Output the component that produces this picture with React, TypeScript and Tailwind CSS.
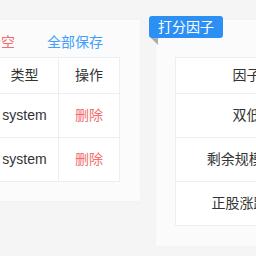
const font = "font-['Liberation_Sans','Noto_Sans_CJK_SC',sans-serif]";

const leftRows = [
  { name: "默认", type: "system" },
  { name: "默认", type: "system" },
];

const factors = ["双低", "剩余规模(亿)", "正股涨跌幅"];

const App: React.FC = () => {
  return (
    <div
      className={`w-[256px] h-[256px] overflow-hidden bg-[#f5f5f5] ${font} text-[14px] text-[#333]`}
    >
      <div className="flex items-start gap-[16px] pt-[20px] ml-[-130px]">
        {/* left card */}
        <div className="shrink-0 bg-[#fbfbfb] shadow-[0_0_6px_rgba(0,0,0,0.025)] px-[20px] pt-[12px] pb-[19px]">
          <div className="flex justify-end gap-[32px] pr-[17px] h-[20px] leading-[20px] mb-[5px]">
            <span className="text-[#f56c6c]">清空</span>
            <span className="text-[#409eff]">全部保存</span>
          </div>
          <table className="border-collapse bg-white">
            <thead>
              <tr className="h-[36px]">
                <th className="w-[100px] border border-[#ebeef5] font-normal">名称</th>
                <th className="w-[68px] border border-[#ebeef5] font-normal">类型</th>
                <th className="w-[61px] border border-[#ebeef5] font-normal">操作</th>
              </tr>
            </thead>
            <tbody>
              {leftRows.map((row, i) => (
                <tr key={i} className="h-[44px]">
                  <td className="border border-[#ebeef5] text-center">{row.name}</td>
                  <td className="border border-[#ebeef5] text-center">{row.type}</td>
                  <td className="border border-[#ebeef5] text-center text-[#f56c6c]">删除</td>
                </tr>
              ))}
            </tbody>
          </table>
        </div>

        {/* right card */}
        <div className="relative shrink-0 w-[320px] bg-[#fbfbfb] shadow-[0_0_6px_rgba(0,0,0,0.025)] pl-[19px] pt-[37px] pb-[20px]">
          <div className="absolute left-[-7px] top-[-4px] w-[74px] h-[22px] rounded-[3px] bg-[#2b8ff3] text-white text-center leading-[22px]">
            打分因子
          </div>
          <svg
            className="absolute left-[-5px] top-[18px]"
            width="7"
            height="7"
            viewBox="0 0 7 7"
          >
            <polygon points="0,0 7,0 7,7" fill="#a7adb5" />
          </svg>
          <table className="border-collapse bg-white">
            <thead>
              <tr className="h-[36px]">
                <th className="w-[142px] border border-[#ebeef5] font-normal">因子</th>
                <th className="w-[100px] border border-[#ebeef5] font-normal">权重</th>
              </tr>
            </thead>
            <tbody>
              {factors.map((f) => (
                <tr key={f} className="h-[44px]">
                  <td className="border border-[#ebeef5] text-center">{f}</td>
                  <td className="border border-[#ebeef5] text-center">1</td>
                </tr>
              ))}
            </tbody>
          </table>
        </div>
      </div>
    </div>
  );
};

export default App;
